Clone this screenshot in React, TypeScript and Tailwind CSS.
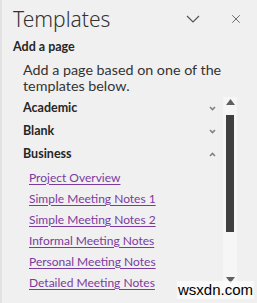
import { X } from "lucide-react";

const categories = [
  { name: "Academic", open: false },
  { name: "Blank", open: false },
  { name: "Business", open: true },
];

const links = [
  "Project Overview",
  "Simple Meeting Notes 1",
  "Simple Meeting Notes 2",
  "Informal Meeting Notes",
  "Personal Meeting Notes",
  "Detailed Meeting Notes",
];

const Caret = ({ up }: { up: boolean }) => (
  <svg width="7" height="5" viewBox="0 0 7 5" className="text-[#808080]">
    <path
      d={up ? "M1 4 L3.5 1.5 L6 4" : "M1 1 L3.5 3.5 L6 1"}
      fill="none"
      stroke="currentColor"
      strokeWidth="1.6"
    />
  </svg>
);

const App = () => {
  return (
    <div
      className="relative w-[257px] h-[303px] overflow-hidden bg-[#f0f0f0] border-l-2 border-[#e2e2e2] text-[#262626]"
      style={{ fontFamily: 'Lato, "Noto Sans", sans-serif' }}
    >
      <div className="flex items-center h-[38px] pl-[11px] pr-[14px]">
        <h1
          className="flex-1 text-[21px] font-light leading-none text-[#333]"
          style={{ fontFamily: '"Noto Sans", sans-serif' }}
        >
          Templates
        </h1>
        <svg width="14" height="9" viewBox="0 0 14 9" className="mr-[29px] mt-[1px]">
          <path d="M1 1 L7 7 L13 1" fill="none" stroke="#555" strokeWidth="1.2" />
        </svg>
        <X size={14} strokeWidth={1.3} className="text-[#444]" />
      </div>

      <p className="pl-[11px] mt-[1px] text-[12.5px] font-bold leading-[16px]">
        Add a page
      </p>
      <p className="pl-[21px] pr-[20px] mt-[7px] text-[14.3px] leading-[16px] text-[#333]">
        Add a page based on one of the templates below.
      </p>

      <div className="flex mt-[3px] pr-[20px]">
        <div className="flex-1 pl-[21px] pr-[7px]">
          {categories.map((c) => (
            <div key={c.name} className="flex items-center justify-between h-[23px]">
              <span className="text-[12.5px] font-bold">{c.name}</span>
              <Caret up={c.open} />
            </div>
          ))}
          <div className="pl-[6px] pt-[1px]">
            {links.map((l) => (
              <div key={l} className="h-[21px] flex items-center">
                <a className="text-[12px] text-[#7b3aa0] underline underline-offset-2 decoration-1">
                  {l}
                </a>
              </div>
            ))}
          </div>
        </div>
        <div className="w-[14px] bg-[#f6f6f6] flex flex-col items-center pt-[2px] h-[192px]">
          <svg width="9" height="6" viewBox="0 0 9 6">
            <path d="M0 6 L4.5 0 L9 6 Z" fill="#606060" />
          </svg>
          <div className="w-[8px] h-[117px] bg-[#404040] mt-[10px]" />
          <div className="flex-1" />
          <svg width="9" height="6" viewBox="0 0 9 6" className="mb-[6px]">
            <path d="M0 0 L9 0 L4.5 6 Z" fill="#606060" />
          </svg>
        </div>
      </div>

      <div
        className="absolute left-[175px] top-[281px] text-[15px] text-black bg-white/60 leading-[18px] px-[1px]"
        style={{ fontFamily: '"Liberation Sans", Arial, sans-serif' }}
      >
        wsxdn.com
      </div>
    </div>
  );
};

export default App;
